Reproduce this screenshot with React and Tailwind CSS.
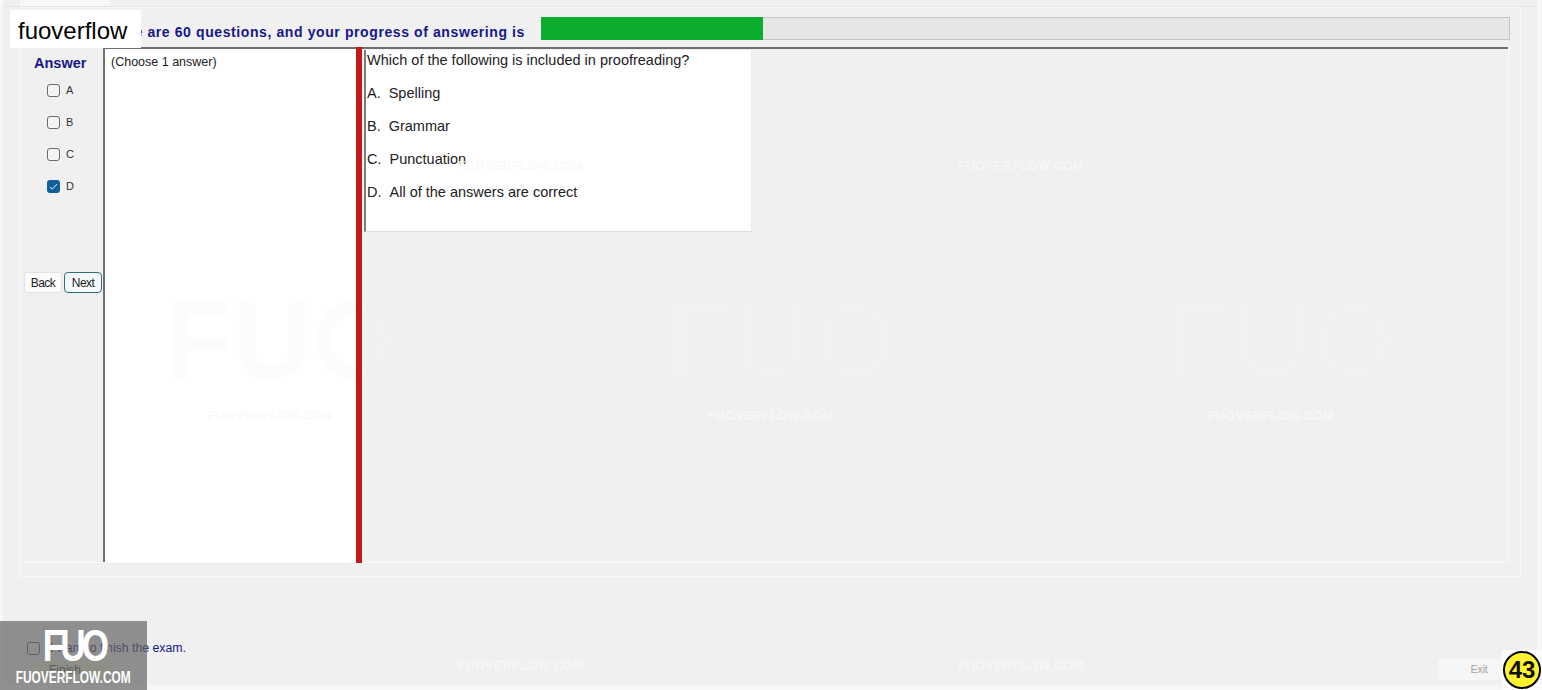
const answers = ['A', 'B', 'C', 'D']
const options = [
  { key: 'A.', text: 'Spelling', gap: 'ml-[8px]' },
  { key: 'B.', text: 'Grammar', gap: 'ml-[8px]' },
  { key: 'C.', text: 'Punctuation', gap: 'ml-[8px]' },
  { key: 'D.', text: 'All of the answers are correct', gap: 'ml-[8px]' },
]
const watermarks = [
  { pos: 'left-[458px] top-[159px]' },
  { pos: 'left-[958px] top-[159px]' },
  { pos: 'left-[208px] top-[409px]' },
  { pos: 'left-[708px] top-[409px]' },
  { pos: 'left-[1208px] top-[409px]' },
  { pos: 'left-[458px] top-[659px]' },
  { pos: 'left-[958px] top-[659px]' },
]
const bigMarks = [
  { pos: 'left-[165px] top-[285px]' },
  { pos: 'left-[665px] top-[285px]' },
  { pos: 'left-[1165px] top-[285px]' },
]

function Box({ checked }) {
  if (checked) {
    return (
      <span className="flex h-[13px] w-[13px] items-center justify-center rounded-[3px] bg-[#11609c]">
        <svg width="9" height="9" viewBox="0 0 9 9" fill="none" stroke="#dbeeff" strokeWidth="1">
          <path d="M1 5l2.2 2.2L8 2" />
        </svg>
      </span>
    )
  }
  return <span className="h-[13px] w-[13px] rounded-[3px] border border-[#6b6b6b] bg-[#f4f4f4]" />
}

export default function App() {
  return (
    <div className="relative h-[690px] w-[1542px] overflow-hidden bg-[#f7f7f7] font-['Liberation_Sans',sans-serif] text-[#1c1c1c]">
      <div className="ml-[3px] flex h-[685px] w-[1534px] flex-col bg-[#f0f0f0]">
        {/* tab strip */}
        <div className="h-[7px] border-b border-[#e4e4e4] pl-[17px]">
          <div className="h-[6px] w-[90px] bg-[#f8f8f8]" />
        </div>

        {/* exam panel */}
        <div className="ml-[16px] flex h-[570px] w-[1502px] flex-col border border-[#f8f8f8] pl-[2px] pt-[9px]">
          <div className="flex h-[23px] items-center">
            <p className="mt-[7px] w-[503px] shrink-0 text-right text-[14px] font-bold tracking-[0.6px] text-[#17178a]">
              There are 60 questions, and your progress of answering is
            </p>
            <div className="ml-[16px] h-[23px] w-[969px] shrink-0 border border-[#c4c4c4] bg-[#e6e6e6]">
              <div className="-m-px h-[23px] w-[222px] bg-[#0cad2d]" />
            </div>
          </div>

          <div className="mt-[7px] flex h-[516px] w-[1487px] border-b border-r border-[#f9f9f9]">
            {/* answer column */}
            <div className="flex w-[81px] shrink-0 flex-col pt-[8px]">
              <div className="ml-[12px] text-[14.5px] font-bold leading-[16px] text-[#17178a]">Answer</div>
              <div className="mt-[12px] flex flex-col">
                {answers.map((a) => (
                  <div key={a} className="flex h-[32px] items-start gap-[6px] pl-[25px] pt-[1px]">
                    <Box checked={a === 'D'} />
                    <span className="-mt-[1px] text-[11px] leading-[14px] text-[#333]">{a}</span>
                  </div>
                ))}
              </div>
              <div className="mt-[61px] flex gap-[2px] pl-[2px]">
                <button className="h-[21px] w-[38px] rounded-[3px] border border-[#e2e2e2] bg-[#fcfcfc] text-[12px] tracking-[-0.6px]">Back</button>
                <button className="h-[21px] w-[38px] rounded-[4px] border border-[#2f6d7c] bg-[#f6f9f9] text-[12px] tracking-[-0.6px]">Next</button>
              </div>
            </div>

            {/* choose column */}
            <div className="h-[515px] w-[253px] shrink-0 border-l-2 border-t-2 border-[#6f6f6f] bg-white pl-[6px] pt-[5px] text-[12.5px] leading-[16px] text-[#222]">
              (Choose 1 answer)
            </div>

            {/* splitter */}
            <div className="relative z-10 h-[516px] w-[6px] shrink-0 bg-[#c01a1a]" />

            {/* question */}
            <div className="flex-1 border-t-2 border-[#6f6f6f] pl-[2px] pt-px">
              <div className="h-[182px] w-[388px] border-b border-l-2 border-r border-b-[#dedede] border-l-[#7d7d7d] border-r-[#ececec] bg-white pl-px text-[14.5px] leading-[33px] text-[#222]">
                <div className="h-[27px] leading-[20px]">Which of the following is included in proofreading?</div>
                {options.map((o) => (
                  <div key={o.key}>
                    {o.key}
                    <span className={o.gap}>{o.text}</span>
                  </div>
                ))}
              </div>
            </div>
          </div>
        </div>

        {/* footer */}
        <div className="flex flex-1 items-start justify-between">
          <div className="ml-[24px] mt-[63px]">
            <div className="flex items-center gap-[10px]">
              <span className="h-[13px] w-[13px] rounded-[3px] border border-[#555]" />
              <span className="text-[12.3px] leading-[16px] text-[#17178a]">I want to finish the exam.</span>
            </div>
            <button className="ml-[6px] mt-[4px] h-[20px] w-[78px] bg-[#eef2d8] pl-[16px] text-left text-[12px] text-[#444]">Finish</button>
          </div>
          <button className="mr-[27px] mt-[82px] h-[21px] w-[72px] bg-[#f6f6f6] pl-[10px] text-[11px] tracking-[-0.3px] text-[#a5a5a5]">Exit</button>
        </div>
      </div>

      {/* overlays baked into the picture */}
      {bigMarks.map((m) => (
        <div key={m.pos} className={`absolute ${m.pos} text-[110px] font-bold leading-[110px] text-[#f6f6f6] opacity-25`}>
          FUO
        </div>
      ))}
      {watermarks.map((m) => (
        <div key={m.pos} className={`absolute ${m.pos} text-[12px] font-bold leading-[14px] tracking-[0.7px] text-[#f9f9f9] opacity-80`}>
          FUOVERFLOW.COM
        </div>
      ))}

      <div className="absolute left-[10px] top-[10px] flex h-[38px] w-[131px] items-center bg-white pl-[8px] pt-[3px] text-[24px] leading-none text-black">
        fuoverflow
      </div>

      <div className="absolute bottom-0 left-0 flex h-[69px] w-[147px] flex-col items-center bg-[#646464]/70 text-white">
        <div className="mt-[2px] scale-x-[0.8] text-[44px] font-bold leading-[46px] tracking-[-5px]">FUO</div>
        <div className="mt-[1px] scale-x-[0.7] whitespace-nowrap text-[17px] font-bold leading-[16px]">FUOVERFLOW.COM</div>
      </div>

      <div className="absolute bottom-0 right-0 flex h-[40px] w-[40px] items-center justify-center bg-[#fbfbfb]">
        <div className="flex h-[38px] w-[38px] items-center justify-center rounded-full border-2 border-black bg-[#fff22e] text-[24px] font-bold leading-none text-[#111]">
          43
        </div>
      </div>
    </div>
  )
}
